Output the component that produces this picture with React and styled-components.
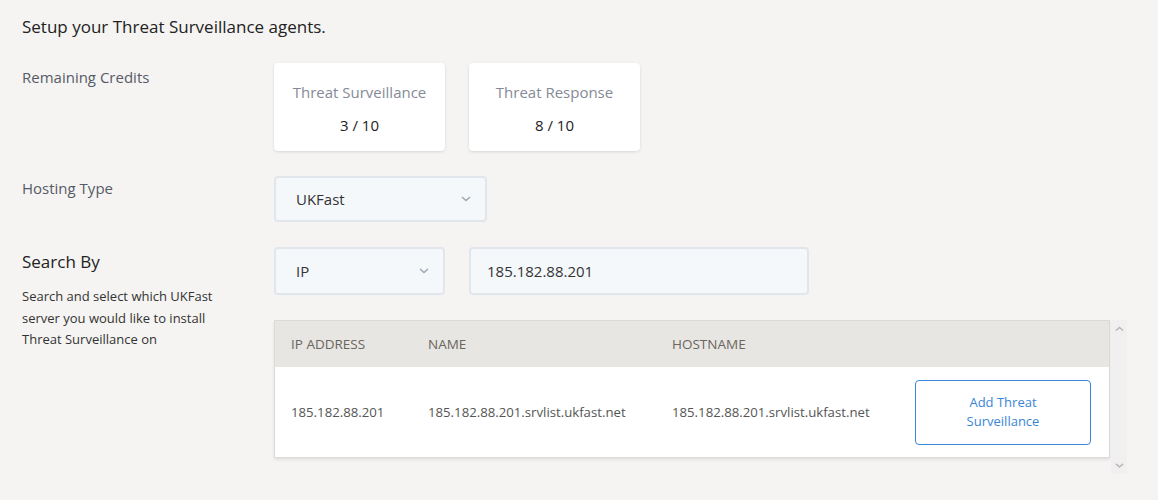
import React from "react";
import styled, { createGlobalStyle } from "styled-components";

const Global = createGlobalStyle`
  html, body { margin: 0; padding: 0; background: #f5f4f2; }
  body { font-family: "Open Sans", "Noto Sans", "Liberation Sans", sans-serif; color: #333; }
  * { box-sizing: border-box; }
`;

const Page = styled.div`
  padding: 14px 0 0 22px;
  width: 1158px;
  height: 500px;
`;

const Heading = styled.h1`
  margin: 0 0 23px;
  font-size: 17px;
  font-weight: 400;
  color: #222;
  line-height: 26px;
`;

const Section = styled.div`
  display: grid;
  grid-template-columns: 252px 1fr;
  align-items: start;
  margin-bottom: 25px;
`;

const Label = styled.div`
  font-size: 15px;
  color: #555b66;
  padding-top: ${(p) => p.$pt || 0}px;
  line-height: 20px;
`;

const BigLabel = styled.div`
  font-size: 17px;
  color: #222;
  line-height: 24px;
  padding-top: 3px;
  margin-bottom: 12px;
`;

const Desc = styled.div`
  font-size: 13px;
  line-height: 21.5px;
  color: #333;
  width: 215px;
`;

const Row = styled.div`
  display: flex;
  gap: 24px;
`;

const Card = styled.div`
  width: 171px;
  height: 88px;
  background: #fff;
  border-radius: 4px;
  box-shadow: 0 1px 3px rgba(0, 0, 0, 0.12);
  display: flex;
  flex-direction: column;
  align-items: center;
  padding-top: 18px;
`;

const CardTitle = styled.div`
  font-size: 15px;
  color: #858a96;
  line-height: 22px;
`;

const CardValue = styled.div`
  font-size: 15px;
  color: #222;
  line-height: 22px;
  margin-top: 11px;
`;

const Select = styled.div`
  width: ${(p) => p.$w}px;
  height: ${(p) => p.$h}px;
  background: #f5f8fb;
  border: 2px solid #e1e6ec;
  border-radius: 4px;
  display: flex;
  align-items: center;
  justify-content: space-between;
  padding: 0 14px 0 20px;
  font-size: 15px;
  color: #333;
`;

const Input = styled.div`
  width: 340px;
  height: 48px;
  background: #f5f8fb;
  border: 2px solid #e1e6ec;
  border-radius: 4px;
  display: flex;
  align-items: center;
  padding-left: 16px;
  font-size: 15px;
  color: #333;
`;

const Content = styled.div`
  display: flex;
  flex-direction: column;
`;

const TableArea = styled.div`
  display: flex;
  margin-top: 25px;
  height: 154px;
`;

const TableBox = styled.div`
  width: 836px;
  height: 138px;
  background: #fff;
  border: 1px solid #dcdad6;
  box-shadow: 0 2px 3px rgba(0, 0, 0, 0.08);
`;

const HeadRow = styled.div`
  display: grid;
  grid-template-columns: 137px 244px 244px 1fr;
  align-items: center;
  height: 46px;
  background: #e8e6e2;
  padding-left: 16px;
  font-size: 13.5px;
  color: #6a655f;
`;

const BodyRow = styled.div`
  display: grid;
  grid-template-columns: 137px 244px 244px 1fr;
  align-items: center;
  height: 90px;
  padding-left: 16px;
  font-size: 13.2px;
  color: #555;
`;

const Button = styled.button`
  width: 176px;
  height: 65px;
  margin-left: -1px;
  background: #fff;
  border: 1px solid #3a86d6;
  border-radius: 4px;
  color: #3a86d6;
  font-family: inherit;
  font-size: 13px;
  line-height: 19px;
  padding: 0 30px;
`;

const Scrollbar = styled.div`
  width: 16px;
  height: 154px;
  margin-left: 1px;
  background: #f0f0f0;
  display: flex;
  flex-direction: column;
  justify-content: space-between;
  align-items: center;
  padding: 6px 0;
`;

const Chevron = ({ up, color = "#a0a8b4", size = 10 }) => (
  <svg width={size} height={size * 0.6} viewBox="0 0 10 6">
    <path
      d={up ? "M1 5 L5 1.5 L9 5" : "M1 1 L5 4.5 L9 1"}
      fill="none"
      stroke={color}
      strokeWidth="1.6"
    />
  </svg>
);

export default function App() {
  return (
    <Page>
      <Global />
      <Heading>Setup your Threat Surveillance agents.</Heading>

      <Section>
        <Label $pt={4}>Remaining Credits</Label>
        <Row>
          <Card>
            <CardTitle>Threat Surveillance</CardTitle>
            <CardValue>3 / 10</CardValue>
          </Card>
          <Card>
            <CardTitle>Threat Response</CardTitle>
            <CardValue>8 / 10</CardValue>
          </Card>
        </Row>
      </Section>

      <Section>
        <Label $pt={2}>Hosting Type</Label>
        <Select $w={213} $h={46}>
          <span>UKFast</span>
          <Chevron />
        </Select>
      </Section>

      <Section>
        <div>
          <BigLabel>Search By</BigLabel>
          <Desc>
            Search and select which UKFast server you would like to install
            Threat Surveillance on
          </Desc>
        </div>
        <Content>
          <Row>
            <Select $w={171} $h={48}>
              <span>IP</span>
              <Chevron />
            </Select>
            <Input>185.182.88.201</Input>
          </Row>
          <TableArea>
            <TableBox>
              <HeadRow>
                <div>IP ADDRESS</div>
                <div>NAME</div>
                <div>HOSTNAME</div>
                <div />
              </HeadRow>
              <BodyRow>
                <div>185.182.88.201</div>
                <div>185.182.88.201.srvlist.ukfast.net</div>
                <div>185.182.88.201.srvlist.ukfast.net</div>
                <div>
                  <Button>Add Threat Surveillance</Button>
                </div>
              </BodyRow>
            </TableBox>
            <Scrollbar>
              <Chevron up color="#b8b8b8" size={9} />
              <Chevron color="#b8b8b8" size={9} />
            </Scrollbar>
          </TableArea>
        </Content>
      </Section>
    </Page>
  );
}
